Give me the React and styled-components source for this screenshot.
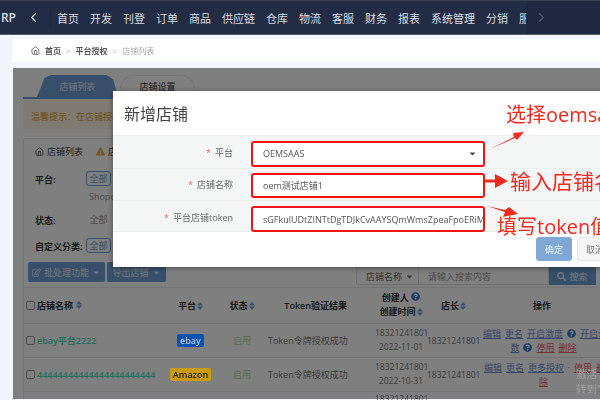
import styled, { createGlobalStyle } from "styled-components";
import { FaCaretDown, FaExclamationTriangle, FaQuestionCircle, FaRegEdit, FaSearch } from "react-icons/fa";
import { FiHome, FiChevronLeft, FiChevronRight } from "react-icons/fi";

const GlobalStyle = createGlobalStyle`
  html, body { margin: 0; height: 400px; overflow: hidden; background: #f3f5fc; }
  body, button, input { font-family: "Open Sans", "Noto Sans CJK SC", sans-serif; }
  * { box-sizing: border-box; }
`;

const Screen = styled.div`
  position: relative;
  width: 600px;
  height: 400px;
  overflow: hidden;
  filter: blur(0.7px);
`;

const Nav = styled.div`
  display: flex;
  align-items: center;
  height: 35px;
  background: #222c44;
  border-top: 1px solid #39404f;
  border-bottom: 1px solid #555b69;
  color: #d9dce2;
  overflow: hidden;
`;
const Brand = styled.div`
  width: 16px;
  font-size: 12px;
  font-weight: 600;
  text-align: right;
  flex: none;
`;
const NavToggle = styled.div`
  display: flex;
  align-items: center;
  justify-content: ${(p) => (p.$start ? "flex-start" : "center")};
  flex: none;
  width: ${(p) => p.$w}px;
  height: 100%;
  padding-left: ${(p) => (p.$start ? 8 : 0)}px;
  color: ${(p) => p.$color};
  background: ${(p) => p.$bg || "transparent"};
  font-size: 15px;
`;
const NavList = styled.div`
  display: flex;
  gap: 11px;
  flex: none;
  width: 476px;
  padding-left: 6px;
  overflow: hidden;
  border-left: 1px solid #1d263c;
  font-size: 11px;
  white-space: nowrap;
`;

const Crumb = styled.div`
  display: flex;
  align-items: center;
  gap: 5px;
  height: 23px;
  margin: 4px 0 6px 13px;
  padding-left: 18px;
  background: #fff;
  font-size: 8px;
  color: #555;
`;
const CrumbPart = styled.span`
  color: ${(p) => (p.$muted ? "#aaa" : "#555")};
  font-weight: ${(p) => (p.$muted ? 400 : 600)};
`;
const CrumbSep = styled.span`
  color: #bbb;
  font-size: 8px;
`;

const Content = styled.div`
  position: relative;
  margin-left: 13px;
  height: 331px;
  padding: 7px 0 0 10px;
  background: #fff;
  font-size: 9px;
  color: #555;
`;
const Tabs = styled.div`
  display: flex;
  gap: 2px;
  height: 24px;
  padding-left: 14px;
  border-bottom: 2px solid #6b9fd8;
`;
const Tab = styled.div`
  display: flex;
  align-items: center;
  justify-content: center;
  width: ${(p) => p.$w}px;
  font-size: 9px;
  border-radius: 14px 14px 0 0;
  color: ${(p) => (p.$active ? "#e4eaf2" : "#333")};
  background: ${(p) => (p.$active ? "#6f9fd4" : "#fff")};
  border: 1px solid ${(p) => (p.$active ? "#6f9fd4" : "#eee")};
  border-bottom: none;
  clip-path: ${(p) => (p.$active ? "polygon(0 100%, 9% 15%, 17% 0, 86% 0, 94% 20%, 100% 100%)" : "none")};
`;
const Notice = styled.div`
  display: flex;
  align-items: center;
  height: 30px;
  padding: 5px 0 0 8px;
  background: #fef7e4;
  color: #d9a22c;
  font-size: 9px;
`;
const Panel = styled.div`
  margin-top: 9px;
  border: 1px solid #e8e8e8;
  border-right: none;
`;
const PanelTitle = styled.div`
  display: flex;
  align-items: center;
  gap: 3px;
  height: 24px;
  padding-left: 11px;
  font-size: 9px;
  color: #444;
`;
const WarnIcon = styled(FaExclamationTriangle)`
  margin-left: 10px;
  color: #e5ad2f;
  font-size: 9px;
`;
const FilterRow = styled.div`
  display: flex;
  height: ${(p) => p.$h}px;
  padding: ${(p) => p.$top}px 0 0 11px;
  font-size: 9px;
`;
const FilterLabel = styled.div`
  width: 51px;
  font-weight: 700;
  color: #333;
  padding-top: 2px;
  white-space: nowrap;
`;
const FilterOptions = styled.div`
  display: flex;
  flex-direction: column;
  gap: 4px;
  color: #999;
`;
const FilterTag = styled.div`
  width: 25px;
  height: 15px;
  line-height: 13px;
  text-align: center;
  color: ${(p) => (p.$plain ? "#999" : "#6f9fd4")};
  border: 1px solid ${(p) => (p.$plain ? "transparent" : "#6f9fd4")};
  border-radius: 3px;
`;
const FilterNote = styled.div`
  padding-left: 3px;
`;

const Toolbar = styled.div`
  display: flex;
  align-items: flex-start;
  height: 26px;
  padding: 0 4px 0 4px;
  border-bottom: 1px solid #e8e8e8;
`;
const ToolButton = styled.div`
  display: flex;
  align-items: center;
  justify-content: center;
  gap: 3px;
  width: ${(p) => p.$w}px;
  height: 20px;
  margin-right: 2px;
  background: #6f9fd4;
  color: #e6eef7;
  border-radius: 2px;
  font-size: 9px;
`;
const SearchGroup = styled.div`
  display: flex;
  align-items: center;
  margin: 5px 0 0 auto;
  height: 18px;
  font-size: 9px;
  color: #666;
`;
const SearchSelect = styled.div`
  display: flex;
  align-items: center;
  gap: 3px;
  padding-left: 9px;
  width: 63px;
  height: 100%;
  border: 1px solid #ddd;
`;
const SearchInput = styled.div`
  display: flex;
  align-items: center;
  width: 130px;
  height: 100%;
  padding-left: 9px;
  border: 1px solid #ddd;
  border-left: none;
  color: #999;
`;
const SearchButton = styled.div`
  display: flex;
  align-items: center;
  justify-content: center;
  gap: 3px;
  width: 47px;
  height: 100%;
  background: #6f9fd4;
  color: #e6eef7;
`;

const Table = styled.table`
  width: 590px;
  table-layout: fixed;
  border-collapse: collapse;
  font-size: 9px;
`;
const HeadCell = styled.th`
  height: 35px;
  padding: 0 ${(p) => p.$right || 0}px 0 0;
  width: ${(p) => p.$w}px;
  font-weight: 600;
  color: #333;
  text-align: ${(p) => p.$align || "center"};
  border-bottom: 1px solid #e8e8e8;
  white-space: nowrap;
`;
const Cell = styled.td`
  height: ${(p) => p.$h || 34}px;
  padding: 0 ${(p) => p.$right || 0}px 0 0;
  text-align: ${(p) => p.$align || "center"};
  vertical-align: ${(p) => p.$valign || "middle"};
  border-bottom: 1px solid #e8e8e8;
  color: #777;
  font-size: ${(p) => (p.$numeric ? 8.5 : 9)}px;
  white-space: nowrap;
`;
const NameCell = styled.div`
  display: flex;
  align-items: center;
  gap: 2px;
  padding-left: 2px;
  font-weight: 600;
  color: ${(p) => (p.$head ? "#333" : "#3fe0b8")};
`;
const CheckBox = styled.span`
  display: inline-block;
  flex: none;
  width: 9px;
  height: 9px;
  border: 1px solid #999;
  border-radius: 2px;
  background: #fff;
`;
const SortMark = styled.svg`
  width: 6px;
  height: 8px;
  margin-left: 1px;
  vertical-align: -1px;
`;
const PlatformBadge = styled.span`
  position: relative;
  z-index: 2;
  display: inline-block;
  padding: 0 ${(p) => p.$pad}px;
  line-height: 13px;
  border-radius: 2px;
  font-weight: 600;
  font-size: 9px;
  background: ${(p) => p.$bg};
  color: ${(p) => p.$color};
`;
const StatusText = styled.span`
  color: #a8d99a;
`;
const Stacked = styled.div`
  line-height: 14px;
`;
const Actions = styled.div`
  display: flex;
  flex-direction: column;
  gap: 1px;
  width: 134px;
  padding-left: 3px;
  line-height: 13px;
  overflow: hidden;
`;
const ActionLine = styled.div`
  display: flex;
  align-items: center;
  gap: 4px;
  justify-content: ${(p) => (p.$center ? "center" : "flex-start")};
  padding-left: ${(p) => p.$indent || 0}px;
  padding-right: ${(p) => (p.$center ? 10 : 0)}px;
`;
const ActionLink = styled.span`
  flex: none;
  color: ${(p) => (p.$danger ? "#f0616a" : "#6f8fd4")};
  text-decoration: underline;
`;
const HelpIcon = styled(FaQuestionCircle)`
  color: #3b78c9;
  font-size: 9px;
  flex: none;
`;

const Dim = styled.div`
  position: absolute;
  inset: 0;
  z-index: 1;
  background: rgba(0, 0, 0, 0.5);
`;
const Watermark = styled.div`
  position: absolute;
  left: 563px;
  top: 299px;
  z-index: 2;
  color: #a0a0a0;
  font-size: 10.5px;
  line-height: 15px;
  white-space: nowrap;
`;

const Modal = styled.div`
  position: absolute;
  left: 113px;
  top: 91px;
  z-index: 3;
  width: 500px;
  height: 176px;
  background: #fff;
  box-shadow: 0 1px 6px rgba(0, 0, 0, 0.4);
`;
const ModalTitle = styled.div`
  display: flex;
  align-items: center;
  height: 44px;
  padding-left: 11px;
  font-size: 16px;
  color: #444;
`;
const ModalBody = styled.div`
  height: 97px;
  background: #f5f7f7;
  border-top: 1px solid #eceeee;
  border-bottom: 1px solid #eceeee;
`;
const FormRow = styled.div`
  display: flex;
  align-items: center;
  height: ${(p) => (p.$first ? 33 : 32)}px;
  border-bottom: ${(p) => (p.$last ? "none" : "1px solid #eceeee")};
`;
const FieldLabel = styled.label`
  width: 120px;
  text-align: right;
  font-size: 9px;
  color: #666;
  white-space: nowrap;
  &::before {
    content: "*";
    color: #f0616a;
    margin-right: 4px;
  }
`;
const FieldBox = styled.div`
  display: flex;
  align-items: center;
  justify-content: space-between;
  width: 234px;
  height: ${(p) => p.$h}px;
  margin: ${(p) => p.$drop}px 0 0 18px;
  padding: 0 6px 0 10px;
  background: #fff;
  border: 2px solid #f01414;
  border-radius: 3px;
  font-size: 9px;
  color: #555;
  white-space: nowrap;
  overflow: hidden;
`;
const Caret = styled(FaCaretDown)`
  flex: none;
  color: #444;
  font-size: 9px;
`;
const ModalFooter = styled.div`
  display: flex;
  gap: 5px;
  padding: 5px 0 0 423px;
`;
const ModalButton = styled.div`
  display: flex;
  align-items: center;
  justify-content: center;
  flex: none;
  width: 36px;
  height: 24px;
  border-radius: 3px;
  font-size: 9px;
  color: ${(p) => (p.$primary ? "#eaf1f9" : "#777")};
  background: ${(p) => (p.$primary ? "#7fa8d6" : "#f5f5f5")};
  border: 1px solid ${(p) => (p.$primary ? "#7fa8d6" : "#e6e6e6")};
`;

const Note = styled.div`
  position: absolute;
  left: ${(p) => p.$x}px;
  top: ${(p) => p.$y}px;
  z-index: 4;
  font-size: ${(p) => p.$size || 20}px;
  line-height: 26px;
  color: #f02a20;
  white-space: nowrap;
`;
const ArrowMark = styled.svg`
  position: absolute;
  left: 0;
  top: 0;
  z-index: 4;
  width: 600px;
  height: 400px;
  pointer-events: none;
`;

const navItems = ["首页", "开发", "刊登", "订单", "商品", "供应链", "仓库", "物流", "客服", "财务", "报表", "系统管理", "分销", "服务"];

const Sort = () => (
  <SortMark viewBox="0 0 6 8">
    <path d="M3 0 L6 3.4 H0 Z M3 8 L0 4.6 H6 Z" fill="#6f9fd4" />
  </SortMark>
);

const App = () => {
  return (
    <Screen>
      <GlobalStyle />
      <Nav>
        <Brand>RP</Brand>
        <NavToggle $w={34} $color="#d9dce2"><FiChevronLeft /></NavToggle>
        <NavList>
          {navItems.map((item) => <span key={item}>{item}</span>)}
        </NavList>
        <NavToggle $w={74} $start $color="#4f576b" $bg="#1f2840"><FiChevronRight /></NavToggle>
      </Nav>
      <Crumb>
        <FiHome size={9} />
        <CrumbPart>首页</CrumbPart>
        <CrumbSep>&gt;</CrumbSep>
        <CrumbPart>平台授权</CrumbPart>
        <CrumbSep>&gt;</CrumbSep>
        <CrumbPart $muted>店铺列表</CrumbPart>
      </Crumb>
      <Content>
        <Tabs>
          <Tab $active $w={81}>店铺列表</Tab>
          <Tab $w={75}>店铺设置</Tab>
        </Tabs>
        <Notice>温馨提示：在店铺授权前请先确认平台信息</Notice>
        <Panel>
          <PanelTitle>
            <FiHome size={9} />店铺列表<WarnIcon />店铺授权说明
          </PanelTitle>
          <FilterRow $h={49} $top={8}>
            <FilterLabel>平台:</FilterLabel>
            <FilterOptions>
              <FilterTag>全部</FilterTag>
              <FilterNote>Shopee</FilterNote>
            </FilterOptions>
          </FilterRow>
          <FilterRow $h={23} $top={0}>
            <FilterLabel>状态:</FilterLabel>
            <FilterTag $plain>全部</FilterTag>
          </FilterRow>
          <FilterRow $h={27} $top={3}>
            <FilterLabel>自定义分类:</FilterLabel>
            <FilterTag>全部</FilterTag>
          </FilterRow>
          <Toolbar>
            <ToolButton $w={77}><FaRegEdit />批处理功能<FaCaretDown /></ToolButton>
            <ToolButton $w={59}>导出店铺<FaCaretDown /></ToolButton>
            <SearchGroup>
              <SearchSelect>店铺名称<FaCaretDown /></SearchSelect>
              <SearchInput>请输入搜索内容</SearchInput>
              <SearchButton><FaSearch />搜索</SearchButton>
            </SearchGroup>
          </Toolbar>
          <Table>
            <thead>
              <tr>
                <HeadCell $w={141} $align="left">
                  <NameCell $head><CheckBox />店铺名称<Sort /></NameCell>
                </HeadCell>
                <HeadCell $w={51}>平台<Sort /></HeadCell>
                <HeadCell $w={52}>状态<Sort /></HeadCell>
                <HeadCell $w={107} $align="right" $right={28}>Token验证结果</HeadCell>
                <HeadCell $w={52}>
                  <Stacked>创建人 <HelpIcon /></Stacked>
                  <Stacked>创建时间<Sort /></Stacked>
                </HeadCell>
                <HeadCell $w={53}>店长<Sort /></HeadCell>
                <HeadCell $w={134} $align="left"><ActionLine $indent={53}>操作</ActionLine></HeadCell>
              </tr>
            </thead>
            <tbody>
              <tr>
                <Cell $align="left"><NameCell><CheckBox />ebay平台2222</NameCell></Cell>
                <Cell><PlatformBadge $pad={3} $bg="#0a52b0" $color="#a8c4e8">ebay</PlatformBadge></Cell>
                <Cell><StatusText>启用</StatusText></Cell>
                <Cell $align="right" $right={28}>Token令牌授权成功</Cell>
                <Cell $numeric>
                  <Stacked>18321241801</Stacked>
                  <Stacked>2022-11-01</Stacked>
                </Cell>
                <Cell $numeric>18321241801</Cell>
                <Cell $align="left">
                  <Actions>
                    <ActionLine>
                      <ActionLink>编辑</ActionLink><ActionLink>更名</ActionLink><ActionLink>开启激度</ActionLink>
                      <HelpIcon /><ActionLink>开启调</ActionLink>
                    </ActionLine>
                    <ActionLine $center>
                      <ActionLink>数</ActionLink><HelpIcon /><ActionLink $danger>停用</ActionLink><ActionLink $danger>删除</ActionLink>
                    </ActionLine>
                  </Actions>
                </Cell>
              </tr>
              <tr>
                <Cell $align="left"><NameCell><CheckBox />44444444444444444444444</NameCell></Cell>
                <Cell><PlatformBadge $pad={3} $bg="#c99a14" $color="#222">Amazon</PlatformBadge></Cell>
                <Cell><StatusText>启用</StatusText></Cell>
                <Cell $align="right" $right={28}>Token令牌授权成功</Cell>
                <Cell $numeric>
                  <Stacked>18321241801</Stacked>
                  <Stacked>2022-10-31</Stacked>
                </Cell>
                <Cell $numeric>18321241801</Cell>
                <Cell $align="left">
                  <Actions>
                    <ActionLine $indent={1}>
                      <ActionLink>编辑</ActionLink><ActionLink>更名</ActionLink><ActionLink>更多授权</ActionLink>
                      <FaCaretDown color="#6f8fd4" /><ActionLink $danger>停用</ActionLink><ActionLink $danger>删除</ActionLink>
                    </ActionLine>
                    <ActionLine $center><ActionLink $danger>除</ActionLink></ActionLine>
                  </Actions>
                </Cell>
              </tr>
              <tr>
                <Cell colSpan={4} $h={40} />
                <Cell $h={40} $valign="top" $numeric><Stacked>18321241801</Stacked></Cell>
                <Cell colSpan={2} $h={40} />
              </tr>
            </tbody>
          </Table>
        </Panel>
        <Dim />
        <Watermark>
          <div>激活 Windows</div>
          <div>转到"设置"</div>
        </Watermark>
      </Content>
      <Modal>
        <ModalTitle>新增店铺</ModalTitle>
        <ModalBody>
          <FormRow $first>
            <FieldLabel>平台</FieldLabel>
            <FieldBox $h={26} $drop={3}>OEMSAAS<Caret /></FieldBox>
          </FormRow>
          <FormRow>
            <FieldLabel>店铺名称</FieldLabel>
            <FieldBox $h={25} $drop={2}>oem测试店铺1</FieldBox>
          </FormRow>
          <FormRow $last>
            <FieldLabel>平台店铺token</FieldLabel>
            <FieldBox $h={26} $drop={4}>sGFkulUDtZINTtDgTDJkCvAAYSQmWmsZpeaFpoERiMi</FieldBox>
          </FormRow>
        </ModalBody>
        <ModalFooter>
          <ModalButton $primary>确定</ModalButton>
          <ModalButton>取消</ModalButton>
        </ModalFooter>
      </Modal>
      <ArrowMark viewBox="0 0 600 400">
        <path d="M490 149 L514 137 L513 133 L524 132 L517 140 L515 138 Z" fill="#f02a20" />
        <path d="M485 179.5 H495 V174 L508 181 L495 188 V182.5 H485 Z" fill="#f02a20" />
        <path d="M487 206 L505 210 L509 207 L518 214 L503 217 L505 212 Z" fill="#f02a20" />
      </ArrowMark>
      <Note $x={506} $y={102}>选择oemsaas</Note>
      <Note $x={510} $y={168} $size={21}>输入店铺名称</Note>
      <Note $x={497} $y={214}>填写token值</Note>
    </Screen>
  );
};

export default App;
